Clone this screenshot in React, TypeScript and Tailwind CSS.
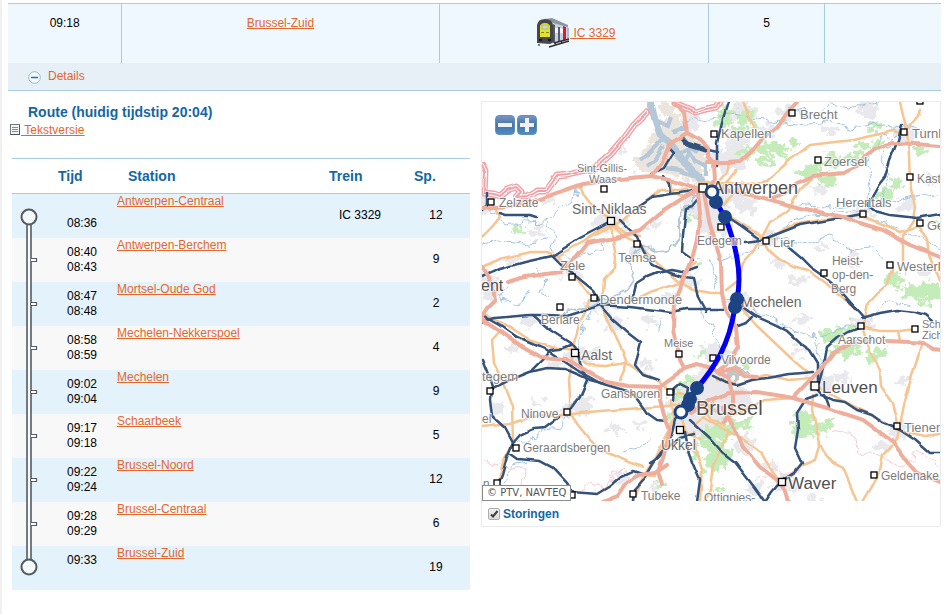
import React, { useState } from 'react';

interface Stop {
  name: string;
  arrival: string;
  departure: string;
  train?: string;
  track: string;
}

const stops: Stop[] = [
  { name: 'Antwerpen-Centraal', arrival: '', departure: '08:36', train: 'IC 3329', track: '12' },
  { name: 'Antwerpen-Berchem', arrival: '08:40', departure: '08:43', track: '9' },
  { name: 'Mortsel-Oude God', arrival: '08:47', departure: '08:48', track: '2' },
  { name: 'Mechelen-Nekkerspoel', arrival: '08:58', departure: '08:59', track: '4' },
  { name: 'Mechelen', arrival: '09:02', departure: '09:04', track: '9' },
  { name: 'Schaarbeek', arrival: '09:17', departure: '09:18', track: '5' },
  { name: 'Brussel-Noord', arrival: '09:22', departure: '09:24', track: '12' },
  { name: 'Brussel-Centraal', arrival: '09:28', departure: '09:29', track: '6' },
  { name: 'Brussel-Zuid', arrival: '09:33', departure: '', track: '19' },
];

const motorways = [
  '482,208 510,206 537,200 583,184 620,179 652,176 670,180 693,188',
  '507,282 525,277 560,272 577,257 588,243 620,237 640,230 660,213 680,200 697,190',
  '482,267 492,283 495,300 487,308 482,316',
  '482,319 500,331 522,347 540,357 567,359 585,370 607,382 627,386 660,387 677,375 684,368 697,364 712,368 720,374',
  '675,300 674,330 680,360 684,368',
  '675,302 682,283 687,270 693,255 697,240 700,213 698,193',
  '704,193 709,220 715,240 721,263 722,293 726,312 736,328 738,347 728,362 717,372',
  '708,163 728,163 740,162 753,150 763,138 777,127 788,112 797,102',
  '675,102 684,113 687,133 670,143 662,163 652,176',
  '687,133 700,140 708,148 708,158 714,164 715,180 708,190',
  '693,188 715,188 730,191 760,197 800,208 843,217 863,224 883,230 910,245 940,257',
  '770,199 785,193 797,183 813,176 843,173 857,167 865,156 876,148 893,143 915,144 940,146',
  '690,413 710,400 730,393 757,392 793,398 827,408 863,420 893,442 907,462 917,473 940,482',
  '793,398 808,382 820,370 833,353 853,343 870,340',
  '887,341 910,342 923,343 933,349 940,350',
  '722,408 732,423 743,447 760,467 777,480 785,490 788,502',
  '717,372 728,378 733,395 733,408 724,422',
  '660,387 660,400 664,415 670,430 664,455 658,472 662,484',
  '667,465 655,473 638,475 627,483 618,496 603,502',
  '718,372 735,368 745,376 757,377',
];

const roads = [
  '482,267 500,259 530,252 547,252 557,256 587,240 623,220 640,205 660,190 687,190',
  '580,185 584,195 590,203 610,220 613,240 616,258 615,268 604,280 603,292 597,299',
  '482,237 492,227 500,217 495,207',
  '557,256 568,270 578,280 585,290 594,298',
  '586,240 600,230 615,225 625,233 640,236',
  '610,223 624,237 637,243 657,263 680,283 695,290 710,293 722,293',
  '632,301 653,291 680,283',
  '680,283 686,270 696,262',
  '670,180 672,192 682,196',
  '700,182 715,183 750,184 767,181 790,160 810,145 835,142 853,140 875,135 893,131 905,134',
  '900,102 903,115 907,130 909,155 910,183 915,207 913,220 903,235 903,263',
  '920,110 918,116 909,127 904,132',
  '743,102 750,120 758,137',
  '762,237 770,222 786,212 800,190 812,178',
  '728,215 745,226 760,235 768,250 778,258 793,266 807,270 832,288 857,310',
  '770,238 783,230 793,225 820,220 860,215 880,224 900,232 918,226 927,240 929,255 940,283',
  '893,270 887,285 877,293 868,303 865,318 862,327',
  '760,240 752,253 743,263 739,280 726,290',
  '712,192 724,205 740,185',
  '718,182 727,172 729,164',
  '720,190 730,178 736,170',
  '743,310 756,325 775,343 793,360 807,372',
  '862,327 868,345 873,357 880,370 881,387 892,403 897,423',
  '923,343 912,375 904,405 897,440 883,455 880,470 872,485 862,502',
  '864,328 880,331 900,331 917,329',
  '898,331 900,340',
  '820,388 845,402 867,413 885,423 897,430 925,436 940,434',
  '813,395 812,410 820,443 826,455 833,463 843,468 849,482 857,502',
  '820,443 815,460 800,466 790,475 782,482',
  '705,418 725,430 745,440 762,453 770,468 780,482',
  '728,430 722,447 713,465 710,490 704,502',
  '717,380 740,384 765,375 790,380 810,378',
  '725,418 745,410 765,400 792,398',
  '482,427 510,424 530,417 563,415 600,411 640,408 667,406 680,404',
  '482,313 510,327 530,340 547,346 573,350',
  '588,300 585,313 578,325 573,343 572,363 569,380 570,397 570,413 578,425 590,440 600,450 613,455 628,462 643,467',
  '603,310 612,328 620,345 627,363 640,372 660,382',
  '575,355 588,365 605,366 627,363 620,380',
  '500,331 492,340 494,363 503,383 512,407 513,443 503,462 498,484',
  '672,400 674,420 665,437 655,460 643,475 637,490 632,502',
  '660,383 672,392 690,395 705,404 718,413',
  '688,410 702,405 712,420 725,425',
  '696,425 706,415 714,400 728,392',
  '700,502 702,470 696,450 694,432',
  '680,413 686,432 700,440',
  '643,475 655,476',
];

const railways = [
  '482,277 500,269 525,262 552,256 580,238 603,226 612,221',
  '620,220 630,230 637,237 644,252 652,265 667,272 683,277 694,278 698,297 706,312',
  '552,256 563,267 577,277 593,290 599,300',
  '637,207 652,197 670,194 687,192 700,190',
  '500,213 506,215 530,215 536,217',
  '482,210 487,205 487,193',
  '697,200 692,206 686,208 683,235 682,252 693,260',
  '632,300 636,284 647,277 657,273 672,270 683,272 697,267',
  '652,174 664,168 668,161 673,153 668,148',
  '664,176 669,184 670,192',
  '728,102 722,122 717,143 717,155 717,166',
  '708,150 718,152',
  '902,125 898,140 890,160 885,177 877,187 867,205 875,211 890,215 917,218 940,214',
  '725,215 740,225 758,238',
  '745,242 760,240 772,236 800,225 835,219 863,214',
  '788,247 800,257 810,267 823,276 840,290 857,310',
  '847,300 858,310 865,318',
  '862,318 880,313 897,310 915,312 925,315 932,321',
  '862,327 848,332 837,338 827,347 825,358 823,368 819,383',
  '740,305 755,316 775,325 787,331 800,343 810,350 818,363 818,383',
  '713,376 725,382 737,385 752,380 767,378 790,374 813,372',
  '816,388 822,395 833,400 845,402 857,410 872,415 883,423 900,430 915,440 930,453 940,453',
  '825,395 829,406',
  '817,395 806,399 797,413 798,430 795,448 802,463 795,472 782,480 772,492 765,502 755,488 745,475 735,462 722,452 710,438 690,420',
  '482,315 500,325 517,337 547,350 565,362 577,370 600,383 627,391 635,396 647,413 657,420 667,421',
  '482,322 495,318 530,315 547,315 567,316 583,311 600,305 630,307 655,310 672,312 687,309 722,309',
  '533,315 550,330 570,343 578,353 580,363 587,380 580,397 572,408',
  '560,416 553,422 545,428 533,429 520,435 513,443',
  '600,305 613,320 628,333 641,343 638,355 635,365 643,375 658,380',
  '482,360 488,375 492,388 491,400 493,417 505,428 513,443 507,457 502,475 497,487',
  '490,390 510,380 530,372 547,368 565,369 577,374 590,380 605,384',
  '532,370 542,360 550,350 560,349 570,345',
  '510,454 517,459 540,461 553,468 567,483 573,492 597,494 610,486 620,477 633,471 645,475',
  '684,411 675,420 672,433 663,450 653,463 643,480 634,490 633,502',
  '685,432 688,450 692,462 700,480 697,502',
  '650,463 658,458 668,447 680,438 694,434',
  '674,400 675,388 680,384 688,388 686,400',
  '738,326 746,323 752,317',
];

const border = '482,165 485,172 484,193 494,194 500,196 507,190 516,187 521,192 516,197 527,196 537,190 547,190 557,176 567,175 580,172 593,170 610,155 623,140 634,125 647,112';
const borderNorth = '675,103 684,107 695,112 706,109 716,107 719,102';

const river = '650,100 655,120 660,135 669,143 676,155 690,168 703,182';

const docks = [
  '640,160 650,152 660,142 668,139',
  '647,166 655,160 663,146',
  '655,120 668,126 671,117',
  '670,142 690,166',
  '676,155 692,148 698,152',
  '684,163 690,152 696,163',
  '666,168 680,170 692,176 702,176',
  '694,160 706,166 706,176',
  '672,132 680,129 686,129',
];

const streams = [
  '694,193 694,205 680,215 680,240 672,248 660,252 648,245 636,250 627,263 634,275 628,287 614,297 597,302 585,308 565,312',
  '483,203 500,217 505,225 525,222 548,221 560,210 575,200 577,188',
  '548,221 555,230 552,245 556,256 578,258 600,250 603,238',
  '482,243 500,240 530,244 548,240',
  '684,122 710,118 735,114 760,118 795,125 830,122 850,128 880,124 905,126 940,132',
  '790,105 815,118 830,104 850,108 880,102',
  '772,236 790,222 815,215 850,212 880,207 910,198 940,193',
  '800,203 838,208 868,204',
  '868,204 872,180 867,160 882,140 897,133',
  '878,205 888,175 880,160 890,145',
  '866,218 890,224 910,235 940,248',
  '720,262 750,250 780,238 805,243 830,236 850,250 870,248 885,256',
  '740,303 765,316 790,328 815,337 832,333 850,326 862,327 890,300 910,308',
  '815,337 818,350 820,368 822,384',
  '710,260 716,275 712,285 730,300 740,303',
  '513,443 530,440 545,430 560,428 572,405 583,390 590,378',
  '575,355 580,340 584,325 594,310',
  '498,484 513,465 530,462',
  '700,306 708,322 716,340 722,352',
  '650,440 640,448 622,452',
  '535,268 545,280 541,294 552,300',
  '508,285 500,300 520,306 530,290',
  '661,318 657,330',
];

const provinces = [
  '482,460 492,464 500,462 508,470 522,467 525,480 519,492 521,502',
  '564,502 569,493 582,490 591,483 606,490 612,473 622,470 628,475',
  '750,480 765,478 775,470 780,475 797,475 802,466',
  '832,430 845,432 856,441 860,453 880,455 887,460 902,468 912,462 913,452 925,455 940,465',
];

// [cx, cy, rx, ry]
const woods = [
  [728, 112, 12, 4], [723, 121, 8, 7], [745, 118, 7, 8], [740, 131, 8, 6], [754, 128, 4, 5], [770, 148, 14, 6], [746, 153, 7, 5],
  [766, 160, 8, 5], [783, 152, 5, 6], [793, 144, 6, 4], [811, 171, 12, 6], [828, 180, 9, 8], [832, 160, 10, 7],
  [853, 158, 9, 6], [864, 146, 7, 4], [878, 142, 5, 7], [875, 126, 7, 4], [884, 195, 10, 7], [897, 183, 6, 5],
  [895, 280, 10, 6], [913, 292, 12, 7], [930, 290, 10, 9], [922, 303, 8, 5], [518, 229, 6, 3], [700, 264, 4, 3],
  [832, 335, 14, 7], [850, 327, 8, 5], [845, 352, 18, 5], [872, 358, 7, 5], [882, 352, 6, 6],
  [803, 422, 10, 12], [814, 428, 14, 7], [828, 424, 5, 6], [802, 434, 8, 5], [710, 437, 10, 12], [722, 430, 12, 8],
  [718, 455, 12, 15], [735, 425, 8, 5], [748, 425, 6, 6], [664, 484, 5, 5], [711, 465, 7, 11], [718, 490, 4, 5],
  [689, 380, 5, 6], [700, 355, 5, 4], [676, 395, 6, 7], [671, 416, 5, 6], [748, 365, 4, 3], [691, 218, 4, 3],
  [920, 151, 8, 3], [937, 224, 4, 3], [694, 452, 4, 8],
];

const towns = [
  [715, 195, 24, 14], [697, 205, 15, 10], [728, 160, 18, 12], [738, 140, 12, 12], [716, 222, 18, 14], [742, 112, 14, 10],
  [700, 405, 32, 25], [712, 385, 22, 16], [685, 425, 16, 14], [735, 400, 18, 12], [716, 352, 14, 10], [740, 303, 14, 9],
  [820, 384, 14, 10], [766, 240, 12, 7], [611, 222, 18, 9], [580, 355, 18, 8], [490, 287, 10, 14], [485, 204, 8, 12],
  [598, 305, 14, 7], [573, 276, 9, 6], [572, 410, 16, 7], [615, 428, 8, 4], [863, 214, 13, 5], [906, 134, 12, 8],
  [785, 484, 13, 8], [898, 430, 10, 8], [862, 324, 14, 5], [800, 350, 7, 4], [842, 377, 8, 5], [815, 500, 8, 3],
  [785, 112, 9, 6], [830, 130, 9, 5], [868, 110, 10, 8], [820, 190, 7, 4], [745, 205, 12, 8], [778, 262, 7, 5],
  [797, 280, 10, 5], [822, 246, 7, 4], [850, 260, 8, 5], [905, 205, 8, 6], [930, 180, 6, 8], [925, 270, 6, 4],
  [640, 250, 9, 6], [655, 225, 8, 4], [537, 232, 9, 5], [548, 200, 8, 4], [512, 262, 8, 4], [530, 322, 10, 5],
  [613, 322, 12, 8], [650, 322, 7, 5], [555, 365, 9, 4], [586, 404, 8, 8], [510, 350, 6, 5], [497, 408, 8, 6],
  [745, 445, 10, 8], [755, 490, 8, 8], [770, 465, 8, 5], [883, 447, 9, 5], [905, 380, 6, 4], [645, 365, 9, 4],
  [640, 425, 6, 3], [655, 488, 6, 4], [625, 478, 8, 5], [540, 402, 5, 3], [670, 300, 8, 5], [690, 282, 8, 6],
  [620, 150, 6, 3], [690, 120, 8, 12], [776, 304, 6, 4], [800, 320, 9, 6], [765, 130, 10, 5],
];

// [text, x, baseline, tailwind classes]
const labels: [string, number, number, string][] = [
  ['Brecht', 800, 119, 'text-[13px] fill-[#7b7b7b]'],
  ['Kapellen', 721, 138, 'text-[13px] fill-[#7b7b7b]'],
  ['Turnhout', 912, 138, 'text-[13px] fill-[#7b7b7b]'],
  ['Zoersel', 824, 166, 'text-[13px] fill-[#7b7b7b]'],
  ['Kasterlee', 917, 183, 'text-[12px] fill-[#7b7b7b]'],
  ['Herentals', 836, 207, 'text-[13px] fill-[#7b7b7b]'],
  ['Geel', 927, 230, 'text-[13px] fill-[#7b7b7b]'],
  ['Westerlo', 897, 271, 'text-[13px] fill-[#7b7b7b]'],
  ['Heist-', 832, 265, 'text-[12px] fill-[#7b7b7b]'],
  ['op-den-', 832, 279, 'text-[12px] fill-[#7b7b7b]'],
  ['Berg', 831, 293, 'text-[12px] fill-[#7b7b7b]'],
  ['Lier', 773, 247, 'text-[13px] fill-[#7b7b7b]'],
  ['Edegem', 697, 245, 'text-[12px] fill-[#7b7b7b]'],
  ['Sint-Gillis-', 577, 172, 'text-[11px] fill-[#7b7b7b]'],
  ['Waas', 589, 183, 'text-[11px] fill-[#7b7b7b]'],
  ['Zelzate', 499, 207, 'text-[12px] fill-[#7b7b7b]'],
  ['Sint-Niklaas', 572, 214, 'text-[14px] fill-[#666666]'],
  ['Temse', 618, 262, 'text-[13px] fill-[#7b7b7b]'],
  ['Zele', 560, 270, 'text-[13px] fill-[#7b7b7b]'],
  ['ent', 481, 291, 'text-[16px] fill-[#505050]'],
  ['Dendermonde', 600, 304, 'text-[13px] fill-[#7b7b7b]'],
  ['Berlare', 541, 324, 'text-[12px] fill-[#7b7b7b]'],
  ['Aalst', 581, 360, 'text-[14px] fill-[#666666]'],
  ['Meise', 664, 347, 'text-[11px] fill-[#7b7b7b]'],
  ['Ganshoren', 601, 398, 'text-[12px] fill-[#7b7b7b]'],
  ['Vilvoorde', 721, 364, 'text-[12px] fill-[#7b7b7b]'],
  ['tegem', 482, 381, 'text-[13px] fill-[#7b7b7b]'],
  ['Ninove', 521, 418, 'text-[12px] fill-[#7b7b7b]'],
  ['el', 482, 423, 'text-[12px] fill-[#7b7b7b]'],
  ['Geraardsbergen', 523, 452, 'text-[12px] fill-[#7b7b7b]'],
  ['n', 483, 488, 'text-[12px] fill-[#7b7b7b]'],
  ['Tubeke', 641, 500, 'text-[12px] fill-[#7b7b7b]'],
  ['Ottignies-', 704, 502, 'text-[12px] fill-[#7b7b7b]'],
  ['Ukkel', 661, 450, 'text-[14px] fill-[#666666]'],
  ['Mechelen', 741, 307, 'text-[14px] fill-[#666666]'],
  ['Antwerpen', 712, 194, 'text-[18px] fill-[#505050]'],
  ['Brussel', 696, 415, 'text-[20px] fill-[#505050]'],
  ['Leuven', 822, 393, 'text-[17px] fill-[#505050]'],
  ['Waver', 788, 489, 'text-[17px] fill-[#505050]'],
  ['Aarschot', 838, 344, 'text-[12px] fill-[#7b7b7b]'],
  ['Scherpen-', 922, 328, 'text-[11px] fill-[#7b7b7b]'],
  ['Zichem', 922, 339, 'text-[11px] fill-[#7b7b7b]'],
  ['Tienen', 904, 432, 'text-[13px] fill-[#7b7b7b]'],
  ['Geldenake', 881, 480, 'text-[12px] fill-[#7b7b7b]'],
];

// [cx, cy, size]
const places = [
  [792, 113, 6], [714, 134, 6], [904, 132, 6], [920, 101, 6], [818, 160, 6], [910, 177, 6], [863, 214, 6], [920, 223, 6],
  [890, 265, 6], [824, 273, 6], [766, 241, 6], [721, 227, 6], [604, 189, 6], [491, 202, 6], [611, 221, 7], [637, 244, 6],
  [572, 277, 6], [594, 298, 6], [560, 307, 6], [575, 353, 7], [679, 354, 6], [670, 392, 6], [567, 412, 6], [490, 391, 6],
  [516, 448, 6], [497, 483, 6], [633, 494, 6], [572, 495, 6], [680, 430, 7], [713, 358, 6], [815, 386, 8], [861, 326, 6],
  [915, 329, 6], [897, 426, 6], [874, 475, 6], [782, 482, 7], [703, 188, 8],
];

const routeDots = [[716, 202], [725, 217], [737, 299], [735, 307], [697, 388], [690, 399], [688, 405]];

const linkClass = 'text-[#e2672b] underline hover:no-underline';

const Lines: React.FC<{ items: string[]; className: string }> = ({ items, className }) => (
  <g className={className}>
    {items.map((points) => (
      <polyline key={points} points={points} />
    ))}
  </g>
);

const TrainIcon: React.FC = () => (
  <svg viewBox="0 0 34 30" className="h-[30px] w-[34px]" aria-hidden="true">
    <path d="M13 1 L31 8 L31 22 L17 25 Z" fill="#c9d3e0" />
    <path d="M9 1 L16 0 L32 7 L32 9 L17 5 Z" fill="#8b98a2" />
    <path d="M27 8 L30 9 L30 22 L27 23 Z" fill="#d3202f" />
    <path d="M31 9 L33 10 L33 21 L31 22 Z" fill="#a9bdce" />
    <path d="M17 6 L19 7 L19 24 L17 25 Z M22 9 L24 9 L24 23 L22 23 Z" fill="#5a5a72" />
    <path d="M19 10 L22 10 L22 15 L19 15 Z M24 10 L27 11 L27 15 L24 15 Z" fill="#f5f9ff" />
    <path d="M1 25 L1 7 Q2 1 9 1 Q16 1 17 7 L18 24 L14 26 Z" fill="#46474d" />
    <path d="M4 19 L4 8 Q5 5 9 5 Q13 5 14 8 L14 19 Z" fill="#e5e31f" />
    <path d="M6 7 L12 7 L12 11 L6 11 Z" fill="#b6dee7" stroke="#a3b04a" strokeWidth="0.6" />
    <path d="M5 14.5 H8 M10 14.5 H13" stroke="#7e8218" />
    <path d="M3 22 H6 M12 22 H15" stroke="#16171b" strokeWidth="2" />
    <path d="M18 25 L33 21 M13 29 L33 23" stroke="#2f3035" strokeWidth="1.5" />
    <path d="M19 25 L20 27 M25 23 L26 25" stroke="#2f3035" strokeWidth="1.5" />
    <circle cx="3" cy="27" r="1" fill="#4b4f58" />
  </svg>
);

const TextIcon: React.FC = () => (
  <svg viewBox="0 0 11 12" className="h-3 w-[11px] shrink-0" aria-hidden="true">
    <rect x="0.5" y="0.5" width="9" height="10" fill="#f4f4f4" stroke="#727780" />
    <path d="M2 3.5H8M2 5.5H8M2 7.5H8" stroke="#858b93" />
    <path d="M1 10.5H10M9.5 1V11" stroke="#4f555e" />
  </svg>
);

const TrackSegment: React.FC<{ first: boolean; last: boolean }> = ({ first, last }) => {
  const top = first ? 31 : 0;
  const bottom = last ? 13 : 44;
  return (
    <svg viewBox="0 0 34 44" className="block h-11 w-[34px]" aria-hidden="true">
      <rect x="15" y={top} width="4" height={bottom - top} fill="#f5fbff" />
      <path d={`M15 ${top}V${bottom}`} stroke="#545b60" strokeWidth="1.6" />
      <path d={`M19 ${top}V${bottom}`} stroke="#545b60" strokeWidth="1.6" />
      {first || last ? (
        <circle cx="17" cy={first ? 23 : 21} r="7.5" fill="#f5fbff" stroke="#545b60" strokeWidth="2" />
      ) : (
        <path d="M19 20.5H24.5V23.5H19" fill="#ffffff" stroke="#545b60" strokeWidth="1.2" />
      )}
    </svg>
  );
};

const RouteMap: React.FC = () => (
  <svg
    viewBox="482 102 458 400"
    className="block w-full bg-white"
    role="img"
    aria-label="Antwerpen-Centraal - Brussel-Zuid"
    fontFamily="'Liberation Sans', Arial, sans-serif"
  >
    <defs>
      <filter id="rough" x="-5%" y="-5%" width="110%" height="110%">
        <feTurbulence type="fractalNoise" baseFrequency="0.14" numOctaves="3" seed="7" result="noise" />
        <feDisplacementMap in="SourceGraphic" in2="noise" scale="20" xChannelSelector="R" yChannelSelector="G" />
      </filter>
      <filter id="meander" x="-5%" y="-5%" width="110%" height="110%">
        <feTurbulence type="fractalNoise" baseFrequency="0.09" numOctaves="2" seed="5" result="noise" />
        <feDisplacementMap in="SourceGraphic" in2="noise" scale="12" xChannelSelector="R" yChannelSelector="G" />
      </filter>
      <filter id="bend" x="-5%" y="-5%" width="110%" height="110%">
        <feTurbulence type="fractalNoise" baseFrequency="0.06" numOctaves="1" seed="3" result="noise" />
        <feDisplacementMap in="SourceGraphic" in2="noise" scale="4" xChannelSelector="R" yChannelSelector="G" />
      </filter>
    </defs>

    <g filter="url(#rough)">
      <path d="M636 160 L650 140 L664 122 L660 102 L672 102 L682 122 L690 132 L708 150 L704 184 L670 176 L636 172 Z" fill="#ebe5de" />
      {towns.map(([cx, cy, rx, ry]) => (
        <ellipse key={`${cx}-${cy}`} cx={cx} cy={cy} rx={rx} ry={ry} fill="#e9e9ed" />
      ))}
      {woods.map(([cx, cy, rx, ry]) => (
        <ellipse key={`${cx}-${cy}`} cx={cx} cy={cy} rx={rx} ry={ry} fill="#c3ecb8" />
      ))}
      <path d="M722 373 L742 364 L745 375 L730 381 Z" fill="#c4c4c6" />
    </g>

    <g filter="url(#meander)">
      <Lines items={streams} className="fill-none stroke-[#a3c4e0] stroke-1" />
      <Lines items={provinces} className="fill-none stroke-[#f5cdd2] stroke-1" />
      <polyline points={streams[0]} className="fill-none stroke-[#b4c8da] stroke-2" />
    </g>
    <g filter="url(#bend)">
      <polyline points={river} className="fill-none stroke-[#b4c8da] stroke-[7px]" />
      <Lines items={docks} className="fill-none stroke-[#b4c8da] stroke-[4px]" />
    </g>

    <g filter="url(#bend)" strokeLinejoin="round" strokeLinecap="round">
      {[border, borderNorth].map((points) => (
        <g key={points} className="fill-none">
          <polyline points={points} className="stroke-[#efa3a8] stroke-[7px]" />
          <polyline points={points} className="stroke-white stroke-[4px]" />
          <polyline points={points} className="stroke-[#efa3a8] stroke-2" />
        </g>
      ))}
      <Lines items={roads} className="fill-none stroke-[#f6c592] stroke-[2.5px]" />
      <Lines items={railways} className="fill-none stroke-[#34527a] stroke-[2.5px]" />
      <polyline points="682,138 687,144 706,150" className="fill-none stroke-[#34527a] stroke-[5px]" />
      <Lines items={motorways} className="fill-none stroke-[#efae9c] stroke-[4px]" />
    </g>

    {places.map(([cx, cy, size]) => (
      <rect
        key={`${cx}-${cy}`}
        x={cx - size / 2}
        y={cy - size / 2}
        width={size}
        height={size}
        fill="#ffffff"
        stroke="#000000"
        strokeWidth="1.3"
      />
    ))}

    <path
      d="M712 192 L716 202 L725 217 Q734 240 737 258 Q741 280 737 299 L735 307 Q731 334 720 355 Q711 372 697 388 L690 399 L681 412"
      fill="none"
      stroke="#0000f2"
      strokeWidth="5"
    />
    {labels.map(([text, x, y, className]) => (
      <text key={text} x={x} y={y} className={className} stroke="#ffffff" strokeOpacity="0.75" strokeWidth="2" paintOrder="stroke">
        {text}
      </text>
    ))}
    {routeDots.map(([cx, cy]) => (
      <circle key={`${cx}-${cy}`} cx={cx} cy={cy} r="7" fill="#1c4484" />
    ))}
    <circle cx="712" cy="192" r="6" fill="#ffffff" stroke="#1c4484" strokeWidth="3" />
    <circle cx="681" cy="412" r="6" fill="#ffffff" stroke="#1c4484" strokeWidth="3" />
  </svg>
);

const ZoomButton: React.FC<{ label: string; path: string }> = ({ label, path }) => (
  <button
    type="button"
    aria-label={label}
    className="h-5 w-5 rounded border border-[#5f8fbd] bg-linear-to-b from-[#7795c2] via-[#4474a8] to-[#4f8dc0]"
  >
    <svg viewBox="0 0 18 18" className="block w-full" aria-hidden="true">
      <path d={path} stroke="#f1f1f3" strokeWidth="4" />
    </svg>
  </button>
);

export default function App() {
  const [open, setOpen] = useState(true);
  const [disruptions, setDisruptions] = useState(true);

  return (
    <div className="min-h-screen border-l-2 border-[#f0f0f0] bg-white pt-[3px] pr-1 pl-1.5 font-['Liberation_Sans',Arial,sans-serif] text-xs text-black">
      <table className="w-full table-fixed border-collapse border-t border-[#a9cce3] bg-[#f0f8ff] text-center">
        <colgroup>
          <col className="w-[12.2%]" />
          <col className="w-[34%]" />
          <col className="w-[28.9%]" />
          <col className="w-[12.4%]" />
          <col />
        </colgroup>
        <tbody>
          <tr className="h-[59px] align-top">
            <td className="border-r border-[#a9cce3] pt-[11px]">09:18</td>
            <td className="border-r border-[#a9cce3] pt-[11px]">
              <a href="#brussel-zuid" className={linkClass}>Brussel-Zuid</a>
            </td>
            <td className="border-r border-[#a9cce3] px-0 pt-[14px] pb-0">
              <div className="flex items-center justify-center pl-1">
                <TrainIcon />
                <a href="#ic-3329" className={linkClass}>&nbsp;IC 3329</a>
              </div>
            </td>
            <td className="border-r border-[#a9cce3] pt-[11px]">5</td>
            <td></td>
          </tr>
        </tbody>
      </table>

      <div className="border-b border-[#a9cce3] bg-[#e7eff7] pl-5">
        <button
          type="button"
          aria-expanded={open}
          onClick={() => setOpen(!open)}
          className="flex h-[27px] cursor-pointer items-center gap-[7px] text-[#e2672b]"
        >
          <svg viewBox="0 0 13 13" className="mt-0.5 h-[13px] w-[13px]" aria-hidden="true">
            <circle cx="6.5" cy="6.5" r="5.8" fill="#f6fbff" stroke="#8dbbd9" />
            <path d={open ? 'M3 6.5H10' : 'M3 6.5H10M6.5 3V10'} stroke="#1f75ae" strokeWidth="1.5" />
          </svg>
          Details
        </button>
      </div>

      {open && (
        <div className="flex items-start gap-[11px]">
          <section className="min-w-0 flex-1 pt-[11px]">
            <h2 className="pl-5 text-sm leading-5 font-bold text-[#1466a3]">Route (huidig tijdstip 20:04)</h2>
            <a href="#tekstversie" className={`${linkClass} ml-0.5 flex w-fit items-center leading-4`}>
              <TextIcon />
              <span className="underline">&nbsp;Tekstversie</span>
            </a>

            <div className="pt-5 pl-1">
              <table className="w-full table-fixed border-collapse border-t border-[#a9cce3]">
                <thead>
                  <tr className="h-[35px] border-b border-[#a9cce3] text-left text-sm text-[#1466a3]">
                    <th className="w-[34px]"></th>
                    <th className="w-[71px] pl-3">Tijd</th>
                    <th className="pl-[11px]">Station</th>
                    <th className="w-[84px] pl-[11px]">Trein</th>
                    <th className="w-[68px] pl-3">Sp.</th>
                  </tr>
                </thead>
                <tbody>
                  {stops.map((stop, i) => (
                    <tr key={stop.name} className="h-11 odd:bg-[#e4f2fb] even:bg-[#f8f8f8]">
                      <td className="p-0">
                        <TrackSegment first={i === 0} last={i === stops.length - 1} />
                      </td>
                      <td className="pt-[7px] pl-[21px] align-top leading-[15px]">
                        <div className="h-[15px]">{stop.arrival}</div>
                        <div className="h-[15px]">{stop.departure}</div>
                      </td>
                      <td className="align-top leading-[14px]">
                        <a href={`#${stop.name}`} className={linkClass}>{stop.name}</a>
                      </td>
                      <td className="pb-0.5 text-center">{stop.train}</td>
                      <td className="pb-0.5 text-center">{stop.track}</td>
                    </tr>
                  ))}
                </tbody>
              </table>
            </div>
          </section>

          <section className="mt-[10px] w-[49.3%] border border-[#ebebee]">
            <div className="relative">
              <RouteMap />
              <div className="absolute top-[13px] left-[13px] flex gap-0.5">
                <ZoomButton label="Uitzoomen" path="M2 9H16" />
                <ZoomButton label="Inzoomen" path="M2 9H16M9 2V16" />
              </div>
              <div className="absolute bottom-0 left-0 border border-[#8c8c8c] bg-white px-1 font-['DejaVu_Sans',Verdana,sans-serif] text-[10px] leading-[14px] text-[#555555]">
                © PTV, NAVTEQ
              </div>
            </div>
            <label className="flex h-[25px] items-center gap-[3px] pl-1.5 font-bold text-[#1466a3]">
              <span className="relative h-3 w-3">
                <input
                  type="checkbox"
                  checked={disruptions}
                  onChange={(e) => setDisruptions(e.target.checked)}
                  className="block h-3 w-3 appearance-none rounded-xs border border-[#adadad] bg-linear-to-b from-[#eeeeee] to-[#dcdcdc]"
                />
                {disruptions && (
                  <svg viewBox="0 0 12 12" className="pointer-events-none absolute inset-0" aria-hidden="true">
                    <path d="M3 6.5L5 8.5L9.5 3" fill="none" stroke="#3c3c3c" strokeWidth="2" />
                  </svg>
                )}
              </span>
              Storingen
            </label>
          </section>
        </div>
      )}
    </div>
  );
}
